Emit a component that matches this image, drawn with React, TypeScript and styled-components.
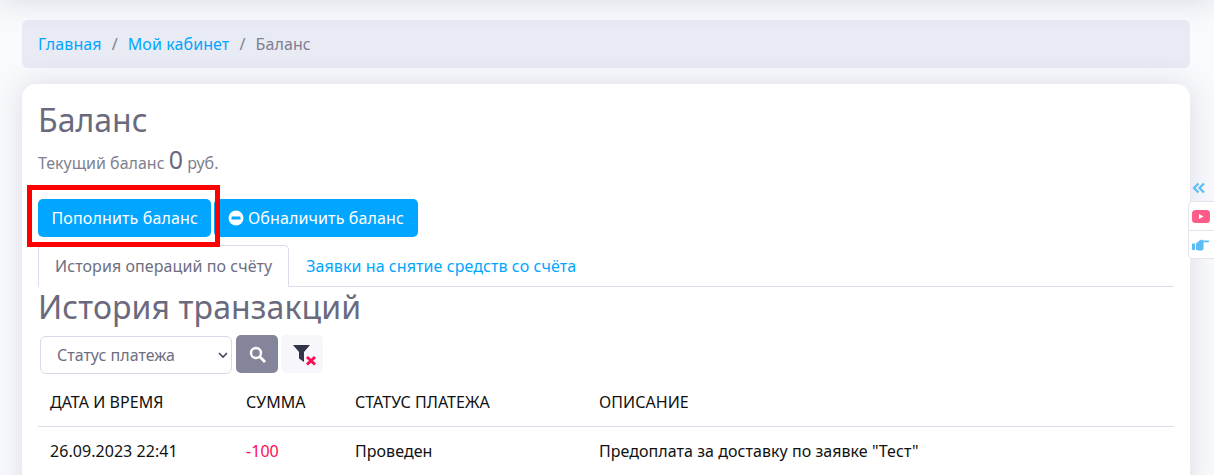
import React from "react";
import styled, { createGlobalStyle } from "styled-components";

const Global = createGlobalStyle`
  html, body { margin: 0; padding: 0; height: 475px; overflow: hidden; }
  body { background: #f9fafd; font-family: "Noto Sans", "Open Sans", sans-serif; color: #6e6e82; }
  * { box-sizing: border-box; }
`;
const Page = styled.div`
  position: relative;
  width: 1214px;
  height: 475px;
  overflow: hidden;
  padding: 20px 24px 0 22px;
  &::before {
    content: "";
    position: absolute;
    left: 0; right: 0; top: -30px; height: 30px;
    box-shadow: 0 0 30px rgba(60, 60, 90, 0.18);
  }
`;
const Breadcrumb = styled.nav`
  display: flex;
  align-items: center;
  height: 48px;
  padding: 0 16px;
  background: #e8ebf4;
  border-radius: 6px;
  font-size: 16px;
  letter-spacing: 0.1px;
  margin-bottom: 16px;
`;
const Crumb = styled.a`
  color: #00a6ff;
  text-decoration: none;
`;
const Sep = styled.span`
  color: #7f7f90;
  padding: 0 10px;
`;
const Current = styled.span`
  color: #7f7f90;
`;
const Card = styled.main`
  background: #fff;
  border-radius: 14px;
  padding: 16px 16px 0;
  height: 420px;
  box-shadow: 0 0 30px rgba(70, 70, 100, 0.16);
`;
const Title = styled.h1`
  margin: 0;
  font-size: 32px;
  line-height: 40px;
  font-weight: 400;
  color: #6a6a7e;
`;
const BalanceRow = styled.p`
  margin: 1px 0 0;
  font-size: 16px;
  line-height: 36px;
  height: 36px;
  color: #7f7f90;
`;
const Amount = styled.span`
  font-size: 25px;
  color: #6a6a7e;
`;
const Actions = styled.div`
  display: flex;
  gap: 3px;
  margin-top: 22px;
`;
const Button = styled.button`
  display: inline-flex;
  align-items: center;
  gap: 4px;
  height: 38px;
  padding: 0 13.5px;
  background: #00a6ff;
  color: #fff;
  border: 0;
  border-radius: 5px;
  font: 400 16px "Noto Sans", sans-serif;
  letter-spacing: 0.13px;
  svg { flex-shrink: 0; }
`;
const Highlight = styled.div`
  position: absolute;
  left: 27px;
  top: 185px;
  width: 193px;
  height: 62px;
  border: 5px solid #f00;
  pointer-events: none;
`;
const Tabs = styled.div`
  display: flex;
  margin-top: 8px;
  height: 42px;
  border-bottom: 1px solid #dcdcec;
`;
const Tab = styled.div<{ $active?: boolean }>`
  height: 42px;
  line-height: 40px;
  padding: 0 16px;
  font-size: 16px;
  letter-spacing: 0.08px;
  border: 1px solid ${(p) => (p.$active ? "#dcdcec" : "transparent")};
  border-bottom-color: ${(p) => (p.$active ? "#fff" : "transparent")};
  border-radius: 5px 5px 0 0;
  background: ${(p) => (p.$active ? "#fff" : "transparent")};
  color: ${(p) => (p.$active ? "#6e6e82" : "#00a6ff")};
`;
const Heading = styled.h2`
  margin: 0;
  font-size: 32px;
  line-height: 40px;
  height: 48px;
  font-weight: 400;
  letter-spacing: 0.12px;
  color: #6a6a7e;
`;
const Filters = styled.form`
  display: flex;
  align-items: flex-start;
  margin-left: 2px;
`;
const SelectBox = styled.div`
  position: relative;
  width: 192px;
  height: 38px;
  margin-top: 1px;
  padding: 0 16px;
  line-height: 36px;
  border: 1px solid #d8d8e8;
  border-radius: 6px;
  font-size: 16px;
  color: #6e6e82;
`;
const Caret = styled.svg`
  position: absolute;
  right: 3px;
  top: 14px;
`;
const SearchButton = styled.button`
  display: flex;
  align-items: center;
  justify-content: center;
  width: 42px;
  height: 38px;
  margin-left: 4px;
  padding: 0;
  border: 0;
  border-radius: 5px;
  background: #84849a;
`;
const ClearButton = styled.button`
  display: flex;
  align-items: center;
  justify-content: center;
  width: 42px;
  height: 38px;
  margin-left: 3px;
  padding: 0;
  border: 0;
  border-radius: 5px;
  background: #f7f7fb;
`;
const Table = styled.div`
  margin-top: 4px;
  color: #111;
  font-size: 16px;
  letter-spacing: 0.05px;
`;
const Row = styled.div<{ $head?: boolean }>`
  display: grid;
  grid-template-columns: 196px 109px 244px 1fr;
  padding-left: 12px;
  height: ${(p) => (p.$head ? "49px" : "47px")};
  align-items: center;
  border-bottom: ${(p) => (p.$head ? "1px solid #dcdcec" : "0")};
`;
const Amt = styled.span`
  color: #ff0a54;
`;
const Side = styled.aside`
  position: absolute;
  right: 0;
  top: 178px;
  width: 26px;
`;
const Chevrons = styled.div`
  height: 20px;
  margin-bottom: 3px;
  padding-right: 4px;
  display: flex;
  align-items: center;
  justify-content: center;
`;
const SideBox = styled.div`
  background: #fff;
  border: 1px solid #e4e4ec;
  border-right: 0;
  border-radius: 5px 0 0 5px;
  height: 58px;
`;
const SideItem = styled.div`
  display: flex;
  align-items: center;
  justify-content: center;
  height: 28px;
  padding-right: 2px;
  & + & { border-top: 1px solid #e4e4ec; }
`;

export default function App() {
  return (
    <Page>
      <Global />
      <Breadcrumb>
        <Crumb>Главная</Crumb>
        <Sep>/</Sep>
        <Crumb>Мой кабинет</Crumb>
        <Sep>/</Sep>
        <Current>Баланс</Current>
      </Breadcrumb>
      <Card>
        <Title>Баланс</Title>
        <BalanceRow>
          Текущий баланс <Amount>0</Amount> руб.
        </BalanceRow>
        <Actions>
          <Button>Пополнить баланс</Button>
          <Button>
            <svg width="16" height="16" viewBox="0 0 16 16">
              <circle cx="8" cy="8" r="7.5" fill="#fff" />
              <rect x="3.5" y="6.5" width="9" height="3" rx="0.5" fill="#00a6ff" />
            </svg>
            Обналичить баланс
          </Button>
        </Actions>
        <Tabs>
          <Tab $active>История операций по счёту</Tab>
          <Tab>Заявки на снятие средств со счёта</Tab>
        </Tabs>
        <Heading>История транзакций</Heading>
        <Filters>
          <SelectBox>
            Статус платежа
            <Caret width="10" height="8" viewBox="0 0 10 8" fill="none">
              <path d="M1 2l4 4 4-4" stroke="#44445a" strokeWidth="1.6" />
            </Caret>
          </SelectBox>
          <SearchButton>
            <svg width="17" height="17" viewBox="0 0 17 17" fill="none">
              <circle cx="7" cy="7" r="5" stroke="#fff" strokeWidth="2.4" />
              <path d="M10.8 10.8L16 16" stroke="#fff" strokeWidth="2.8" />
            </svg>
          </SearchButton>
          <ClearButton>
            <svg width="30" height="24" viewBox="0 0 30 24">
              <path d="M6 3h17l-6 7v10l-5-3.500V10z" fill="#33334a" />
              <path d="M20 15l8 7.500m0-7.500l-8 7.500" stroke="#ff0a54" strokeWidth="3" />
            </svg>
          </ClearButton>
        </Filters>
        <Table>
          <Row $head>
            <span>ДАТА И ВРЕМЯ</span>
            <span>СУММА</span>
            <span>СТАТУС ПЛАТЕЖА</span>
            <span>ОПИСАНИЕ</span>
          </Row>
          <Row>
            <span>26.09.2023 22:41</span>
            <Amt>-100</Amt>
            <span>Проведен</span>
            <span>Предоплата за доставку по заявке "Тест"</span>
          </Row>
        </Table>
      </Card>
      <Highlight />
      <Side>
        <Chevrons>
          <svg width="14" height="12" viewBox="0 0 14 12" fill="none">
            <path d="M6.500 1.500L2 6l4.500 4.500M12 1.500L7.500 6l4.500 4.500" stroke="#5cbcf5" strokeWidth="2.2" />
          </svg>
        </Chevrons>
        <SideBox>
          <SideItem>
            <svg width="18" height="13" viewBox="0 0 18 13">
              <rect width="18" height="13" rx="3.500" fill="#ff5c8a" />
              <path d="M7 4l4.500 2.500L7 9z" fill="#fff" />
            </svg>
          </SideItem>
          <SideItem>
            <svg width="17" height="12" viewBox="0 0 17 12">
              <rect x="0" y="4.500" width="3" height="6.500" fill="#5cbcf5" />
              <path d="M4 4.500L7.500 1.500 10 0.500 11 1.500H16.300a.8.8 0 0 1 0 1.800H11.500V9.500a2 2 0 0 1-2 2H6L4 10.500z" fill="#5cbcf5" />
            </svg>
          </SideItem>
        </SideBox>
      </Side>
    </Page>
  );
}
